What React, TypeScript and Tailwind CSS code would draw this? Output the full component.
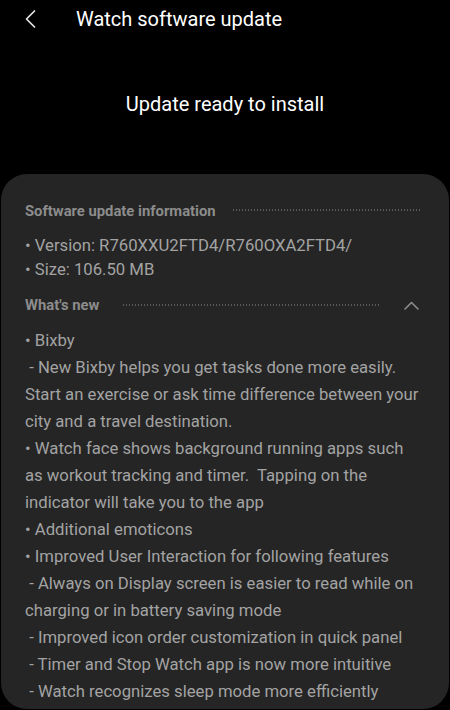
const body: string[] = [
  '• Bixby',
  ' - New Bixby helps you get tasks done more easily. Start an exercise or ask time difference between your city and a travel destination.',
  '• Watch face shows background running apps such as workout tracking and timer.  Tapping on the indicator will take you to the app',
  '• Additional emoticons',
  '• Improved User Interaction for following features',
  ' - Always on Display screen is easier to read while on charging or in battery saving mode',
  ' - Improved icon order customization in quick panel',
  ' - Timer and Stop Watch app is now more intuitive',
  ' - Watch recognizes sleep mode more efficiently',
];

function Dots({ className }: { className: string }) {
  return (
    <div
      className={`h-[2px] flex-1 bg-[linear-gradient(90deg,#5a5a5a_0_1.5px,transparent_1.5px)] bg-[length:3px_2px] bg-repeat-x ${className}`}
    />
  );
}

export default function App() {
  return (
    <div className="h-[710px] overflow-hidden bg-black font-['Roboto',sans-serif]">
      {/* Top bar */}
      <div className="flex items-center pt-[5px]">
        <div className="w-[76px] pl-[25px] flex items-center">
          <svg width="11" height="18" viewBox="0 0 11 18" fill="none">
            <path d="M9.5 1 L1.5 9 L9.5 17" stroke="#e6e6e6" strokeWidth="1.7" strokeLinecap="round" strokeLinejoin="round" />
          </svg>
        </div>
        <h1 className="text-[20px] leading-[28px] text-white">Watch software update</h1>
      </div>

      <p className="mt-[57px] text-center text-[20px] leading-[28px] text-white">Update ready to install</p>

      {/* Info card */}
      <div className="mt-[56px] mx-[1px] rounded-[26px] bg-[#252525] pl-[24px] pr-[25px] pt-[27px] pb-[4px]">
        <div className="flex items-center">
          <span className="text-[14.8px] leading-[20px] font-bold text-[#8c8c8c]">Software update information</span>
          <Dots className="ml-[17px] mr-[2px] -mt-[3px]" />
        </div>

        <div className="mt-[13px] text-[16.7px] leading-[24px] text-[#a3a3a3]">
          <p>• Version: R760XXU2FTD4/R760OXA2FTD4/</p>
          <p>• Size: 106.50 MB</p>
        </div>

        <div className="mt-[13px] flex items-center">
          <span className="text-[14.8px] leading-[20px] font-bold text-[#8c8c8c]">What&apos;s new</span>
          <Dots className="ml-[24px] -mt-[1px]" />
          <div className="ml-[23px] mr-[5px] w-[15px] flex justify-center">
            <svg width="15" height="9" viewBox="0 0 15 9" fill="none">
              <path d="M1 8 L7.5 1.5 L14 8" stroke="#8c8c8c" strokeWidth="1.6" strokeLinecap="round" strokeLinejoin="round" />
            </svg>
          </div>
        </div>

        <div className="mt-[12px] text-[16.7px] leading-[27px] text-[#a3a3a3]">
          {body.map((line, i) => (
            <p key={i} className="whitespace-pre-wrap">
              {line}
            </p>
          ))}
        </div>
      </div>
    </div>
  );
}
